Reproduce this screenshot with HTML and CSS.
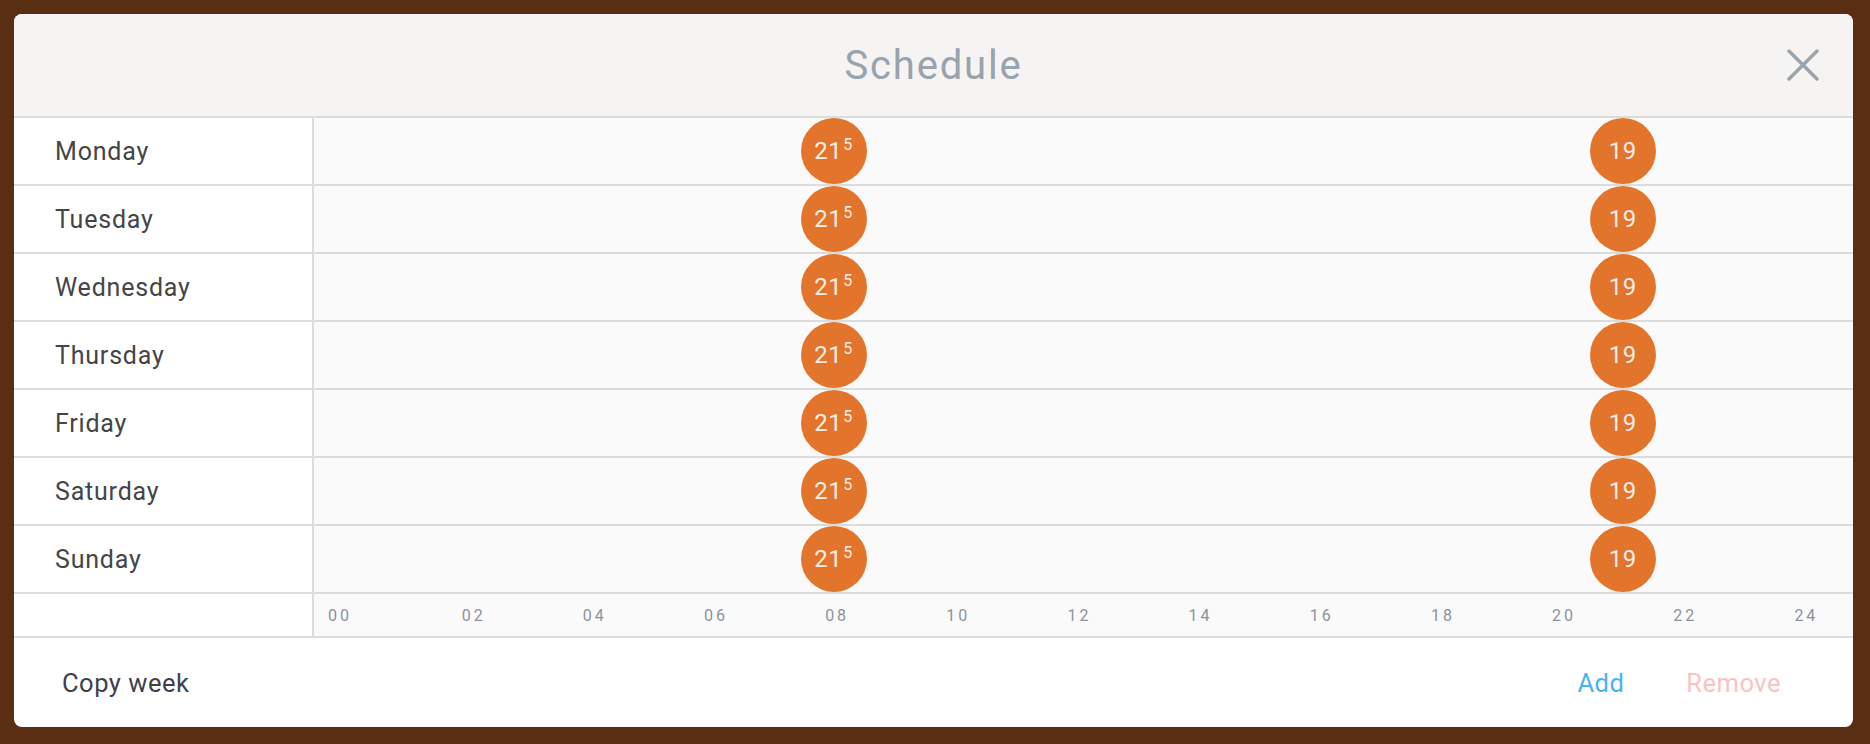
FILE: index.html
```html
<!DOCTYPE html>
<html lang="en">
<head>
  <meta charset="UTF-8" />
  <meta name="viewport" content="width=device-width, initial-scale=1" />
  <title>Schedule</title>
  <link rel="stylesheet" href="styles.css">
</head>
<body>
  <div class="modal">
    <div class="modal-header">
      <h2>Schedule</h2>
      <button class="close" aria-label="Close">
        <svg width="32" height="32" viewBox="0 0 32 32">
          <path d="M2 2 L30 30 M30 2 L2 30" stroke="#9ba4aa" stroke-width="3.5" stroke-linecap="round" fill="none" />
        </svg>
      </button>
    </div>

    <div class="schedule">
      <div class="day-row">
        <div class="day-name">Monday</div>
        <div class="day-track"><div class="track-inner">
          <span class="point" style="left: 33.83%">21<sup>5</sup></span>
          <span class="point" style="left: 87.59%">19</span>
        </div></div>
      </div>
      <div class="day-row">
        <div class="day-name">Tuesday</div>
        <div class="day-track"><div class="track-inner">
          <span class="point" style="left: 33.83%">21<sup>5</sup></span>
          <span class="point" style="left: 87.59%">19</span>
        </div></div>
      </div>
      <div class="day-row">
        <div class="day-name">Wednesday</div>
        <div class="day-track"><div class="track-inner">
          <span class="point" style="left: 33.83%">21<sup>5</sup></span>
          <span class="point" style="left: 87.59%">19</span>
        </div></div>
      </div>
      <div class="day-row">
        <div class="day-name">Thursday</div>
        <div class="day-track"><div class="track-inner">
          <span class="point" style="left: 33.83%">21<sup>5</sup></span>
          <span class="point" style="left: 87.59%">19</span>
        </div></div>
      </div>
      <div class="day-row">
        <div class="day-name">Friday</div>
        <div class="day-track"><div class="track-inner">
          <span class="point" style="left: 33.83%">21<sup>5</sup></span>
          <span class="point" style="left: 87.59%">19</span>
        </div></div>
      </div>
      <div class="day-row">
        <div class="day-name">Saturday</div>
        <div class="day-track"><div class="track-inner">
          <span class="point" style="left: 33.83%">21<sup>5</sup></span>
          <span class="point" style="left: 87.59%">19</span>
        </div></div>
      </div>
      <div class="day-row">
        <div class="day-name">Sunday</div>
        <div class="day-track"><div class="track-inner">
          <span class="point" style="left: 33.83%">21<sup>5</sup></span>
          <span class="point" style="left: 87.59%">19</span>
        </div></div>
      </div>

      <div class="day-row axis-row">
        <div class="day-name"></div>
        <div class="axis">
          <span>00</span><span>02</span><span>04</span><span>06</span><span>08</span>
          <span>10</span><span>12</span><span>14</span><span>16</span><span>18</span>
          <span>20</span><span>22</span><span>24</span>
        </div>
      </div>
    </div>

    <div class="modal-footer">
      <a href="#" class="link copy">Copy week</a>
      <div class="actions">
        <a href="#" class="link add">Add</a>
        <a href="#" class="link remove">Remove</a>
      </div>
    </div>
  </div>
</body>
</html>
```

FILE: styles.css
```css
body {
  margin: 0;
  padding: 14px 17px 17px 14px;
  background: #5a2e13;
  font-family: Roboto, "Liberation Sans", sans-serif;
  height: 744px;
  box-sizing: border-box;
  overflow: hidden;
}

.modal {
  background: #fff;
  border-radius: 8px;
  height: 713px;
  overflow: hidden;
  display: flex;
  flex-direction: column;
}

/* Header */
.modal-header {
  height: 102px;
  background: #f5f4f2;
  border-bottom: 2px solid #dcdcdc;
  display: grid;
  grid-template-columns: 1fr auto 1fr;
  align-items: center;
}

.modal-header h2 {
  grid-column: 2;
  margin: 0;
  font-size: 40px;
  font-weight: 400;
  letter-spacing: 1.8px;
  color: #97a3ad;
}

.close {
  justify-self: end;
  margin-right: 34px;
  padding: 0;
  border: none;
  background: none;
  width: 32px;
  height: 32px;
  cursor: pointer;
}

.close svg {
  display: block;
}

/* Rows */
.day-row {
  display: flex;
  height: 66px;
  border-bottom: 2px solid #dcdcdc;
}

.day-name {
  width: 300px;
  flex-shrink: 0;
  box-sizing: border-box;
  padding-left: 41px;
  border-right: 2px solid #dcdcdc;
  display: flex;
  align-items: center;
  font-size: 25px;
  letter-spacing: 0.8px;
  color: #454548;
}

.day-track {
  flex: 1;
  background: #fafafa;
}

.track-inner {
  position: relative;
  height: 100%;
  margin: 0 48px 0 23px;
}

.point {
  position: absolute;
  top: 0;
  width: 66px;
  height: 66px;
  margin-left: -33px;
  border-radius: 50%;
  background: #e2752b;
  color: #f7eee7;
  font-size: 24px;
  line-height: 66px;
  text-align: center;
  letter-spacing: 0.5px;
}

.point sup {
  font-size: 16px;
  vertical-align: 0;
  position: relative;
  top: -9px;
  margin-left: 1px;
}

/* Axis */
.axis-row {
  height: 42px;
}

.axis {
  flex: 1;
  background: #fafafa;
  display: flex;
  justify-content: space-between;
  align-items: center;
  padding: 0 33px 0 14px;
}

.axis span {
  width: 30px;
  text-align: center;
  font-size: 16px;
  letter-spacing: 3px;
  text-indent: 3px;
  color: #8b939c;
}

.axis span:first-child {
  width: 38px;
  text-align: left;
  text-indent: 0;
}

/* Footer */
.modal-footer {
  flex: 1;
  display: flex;
  align-items: center;
  justify-content: space-between;
  padding: 0 72px 0 48px;
}

.link {
  font-size: 25.5px;
  letter-spacing: 0.5px;
  text-decoration: none;
}

.copy {
  color: #3f3f4e;
}

.actions {
  display: flex;
  gap: 62px;
}

.add {
  color: #48b3f2;
}

.remove {
  color: #fcc1c1;
}
```
